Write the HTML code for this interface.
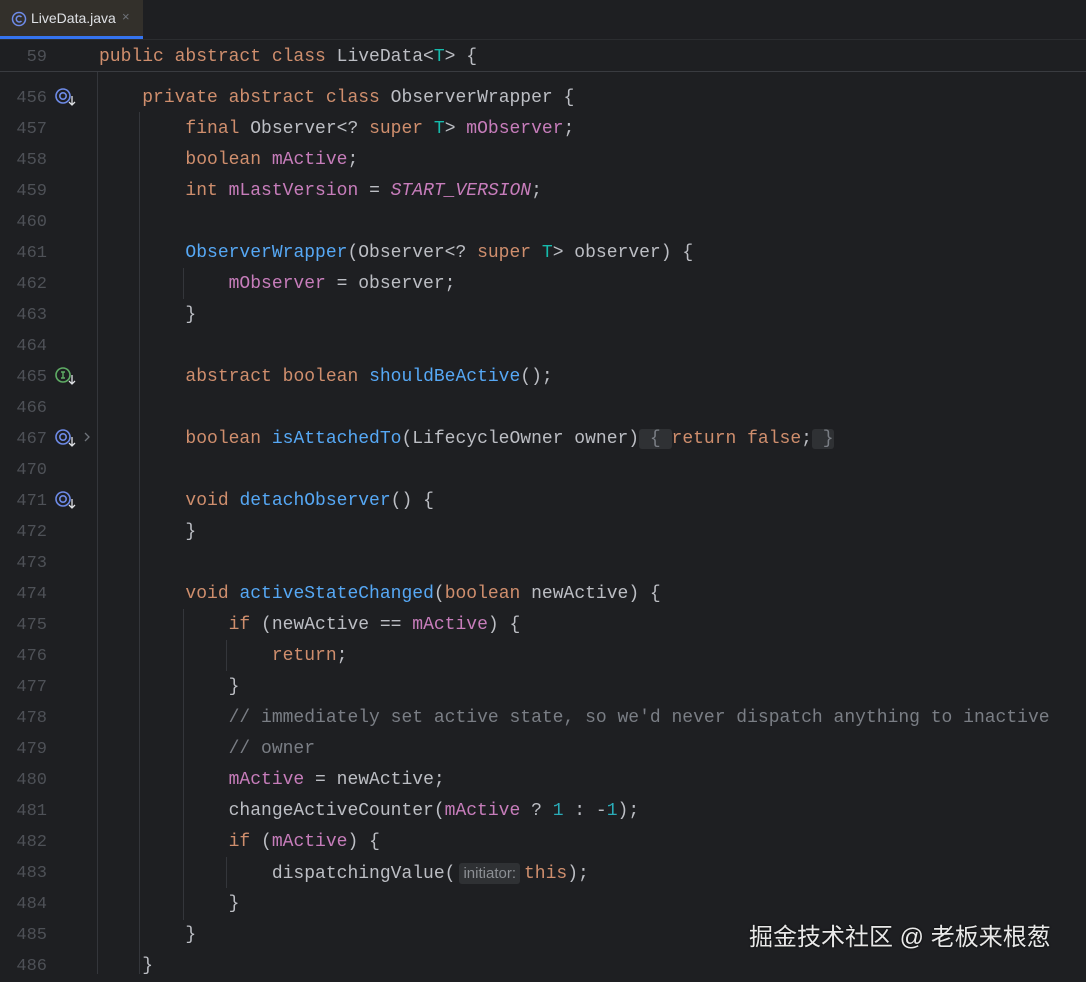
<!DOCTYPE html>
<html><head><meta charset="utf-8"><style>
body{margin:0;width:1086px;height:974px;background:#1e1f22;overflow:hidden;position:relative;font-family:"Liberation Mono",monospace;font-size:18px;color:#bcbec4}
.l{position:absolute;left:99px;height:31px;line-height:31px;white-space:pre;margin-top:2px}
.n{position:absolute;left:0;width:47px;text-align:right;height:31px;line-height:31px;color:#4e5157;font-size:17px;margin-top:2px}
.k{color:#cf8e6d}.f{color:#c77dbb}.m{color:#56a8f5}.t{color:#16baac}.c{color:#7a7e85}.d{color:#2aacb8}.i{font-style:italic}
.g{position:absolute;width:1px;background:#34363b}
.box{background:#2f3134;border-radius:3px}
.hint{font-family:"Liberation Sans",sans-serif;font-size:15px;color:#8c8f94;background:#2f3134;border-radius:3px;padding:2px 4px;margin-right:4px;margin-left:4px}
.ic{position:absolute;left:55px}
</style></head><body>
<div style="position:absolute;left:0;top:0;width:1086px;height:39px;background:#1e1f22;border-bottom:1px solid #2b2d30"></div>
<div style="position:absolute;left:0;top:0;width:143px;height:36px;background:#33302b"></div>
<div style="position:absolute;left:0;top:36px;width:143px;height:3px;background:#3574f0"></div>
<svg style="position:absolute;left:11px;top:11px" width="16" height="16"><circle cx="8" cy="8" r="6.5" fill="none" stroke="#6e8be8" stroke-width="1.5"/><path d="M10.5 6a3 3 0 1 0 0 4" fill="none" stroke="#6e8be8" stroke-width="1.5"/></svg>
<div style="position:absolute;left:31px;top:10px;font-family:'Liberation Sans',sans-serif;font-size:14px;color:#dfe1e5">LiveData.java</div>
<div style="position:absolute;left:122px;top:9px;font-family:'Liberation Sans',sans-serif;font-size:13px;color:#6f737a">×</div>
<div style="position:absolute;left:0;top:71px;width:1086px;height:1px;background:#393b40"></div>
<div class="n" style="top:40px">59</div>
<div class="l" style="top:40px"><span class="k">public abstract class </span>LiveData&lt;<span class="t">T</span>&gt; {</div>

<div class="g" style="left:97px;top:72px;height:902px"></div>
<div class="g" style="left:139px;top:112px;height:862px"></div>
<div class="g" style="left:183px;top:268px;height:31px"></div>
<div class="g" style="left:183px;top:609px;height:311px"></div>
<div class="g" style="left:226px;top:640px;height:31px"></div>
<div class="g" style="left:226px;top:857px;height:31px"></div>

<div class="n" style="top:81px">456</div><div class="n" style="top:112px">457</div><div class="n" style="top:143px">458</div><div class="n" style="top:174px">459</div><div class="n" style="top:205px">460</div><div class="n" style="top:236px">461</div><div class="n" style="top:267px">462</div><div class="n" style="top:298px">463</div><div class="n" style="top:329px">464</div><div class="n" style="top:360px">465</div><div class="n" style="top:391px">466</div><div class="n" style="top:422px">467</div><div class="n" style="top:453px">470</div><div class="n" style="top:484px">471</div><div class="n" style="top:515px">472</div><div class="n" style="top:546px">473</div><div class="n" style="top:577px">474</div><div class="n" style="top:608px">475</div><div class="n" style="top:639px">476</div><div class="n" style="top:670px">477</div><div class="n" style="top:701px">478</div><div class="n" style="top:732px">479</div><div class="n" style="top:763px">480</div><div class="n" style="top:794px">481</div><div class="n" style="top:825px">482</div><div class="n" style="top:856px">483</div><div class="n" style="top:887px">484</div><div class="n" style="top:918px">485</div><div class="n" style="top:949px">486</div>

<svg class="ic" style="top:88px" width="24" height="20"><circle cx="8" cy="8" r="7" fill="none" stroke="#6e8be8" stroke-width="1.6"/><circle cx="8" cy="8" r="3.2" fill="none" stroke="#6e8be8" stroke-width="1.6"/><path d="M17 8v9M14 14l3 3 3-3" fill="none" stroke="#dfe1e5" stroke-width="1.3"/></svg>
<svg class="ic" style="top:367px" width="24" height="20"><circle cx="8" cy="8" r="7" fill="none" stroke="#5fad65" stroke-width="1.6"/><path d="M6 5h4M8 5v6M6 11h4" stroke="#5fad65" stroke-width="1.4"/><path d="M17 8v9M14 14l3 3 3-3" fill="none" stroke="#dfe1e5" stroke-width="1.3"/></svg>
<svg class="ic" style="top:429px" width="40" height="20"><circle cx="8" cy="8" r="7" fill="none" stroke="#6e8be8" stroke-width="1.6"/><circle cx="8" cy="8" r="3.2" fill="none" stroke="#6e8be8" stroke-width="1.6"/><path d="M17 8v9M14 14l3 3 3-3" fill="none" stroke="#dfe1e5" stroke-width="1.3"/><path d="M30 4l4 4-4 4" fill="none" stroke="#6f737a" stroke-width="1.3"/></svg>
<svg class="ic" style="top:491px" width="24" height="20"><circle cx="8" cy="8" r="7" fill="none" stroke="#6e8be8" stroke-width="1.6"/><circle cx="8" cy="8" r="3.2" fill="none" stroke="#6e8be8" stroke-width="1.6"/><path d="M17 8v9M14 14l3 3 3-3" fill="none" stroke="#dfe1e5" stroke-width="1.3"/></svg>

<div class="l" style="top:81px">    <span class="k">private abstract class </span>ObserverWrapper {</div>
<div class="l" style="top:112px">        <span class="k">final </span>Observer&lt;? <span class="k">super </span><span class="t">T</span>&gt; <span class="f">mObserver</span>;</div>
<div class="l" style="top:143px">        <span class="k">boolean </span><span class="f">mActive</span>;</div>
<div class="l" style="top:174px">        <span class="k">int </span><span class="f">mLastVersion</span> = <span class="f i">START_VERSION</span>;</div>
<div class="l" style="top:236px">        <span class="m">ObserverWrapper</span>(Observer&lt;? <span class="k">super </span><span class="t">T</span>&gt; observer) {</div>
<div class="l" style="top:267px">            <span class="f">mObserver</span> = observer;</div>
<div class="l" style="top:298px">        }</div>
<div class="l" style="top:360px">        <span class="k">abstract boolean </span><span class="m">shouldBeActive</span>();</div>
<div class="l" style="top:422px">        <span class="k">boolean </span><span class="m">isAttachedTo</span>(LifecycleOwner owner)<span class="box" style="color:#7a7e85"> { </span><span class="k">return false</span>;<span class="box" style="color:#7a7e85"> }</span></div>
<div class="l" style="top:484px">        <span class="k">void </span><span class="m">detachObserver</span>() {</div>
<div class="l" style="top:515px">        }</div>
<div class="l" style="top:577px">        <span class="k">void </span><span class="m">activeStateChanged</span>(<span class="k">boolean </span>newActive) {</div>
<div class="l" style="top:608px">            <span class="k">if </span>(newActive == <span class="f">mActive</span>) {</div>
<div class="l" style="top:639px">                <span class="k">return</span>;</div>
<div class="l" style="top:670px">            }</div>
<div class="l" style="top:701px">            <span class="c">// immediately set active state, so we'd never dispatch anything to inactive</span></div>
<div class="l" style="top:732px">            <span class="c">// owner</span></div>
<div class="l" style="top:763px">            <span class="f">mActive</span> = newActive;</div>
<div class="l" style="top:794px">            changeActiveCounter(<span class="f">mActive</span> ? <span class="d">1</span> : -<span class="d">1</span>);</div>
<div class="l" style="top:825px">            <span class="k">if </span>(<span class="f">mActive</span>) {</div>
<div class="l" style="top:856px">                dispatchingValue(<span class="hint">initiator:</span><span class="k">this</span>);</div>
<div class="l" style="top:887px">            }</div>
<div class="l" style="top:918px">        }</div>
<div class="l" style="top:949px">    }</div>

<div style="position:absolute;left:749px;top:917px;font-family:'Liberation Sans','Noto Sans CJK SC',sans-serif;font-size:24px;color:#e8e8e8;text-shadow:0 0 2px #000">掘金技术社区 @ 老板来根葱</div>
</body></html>
